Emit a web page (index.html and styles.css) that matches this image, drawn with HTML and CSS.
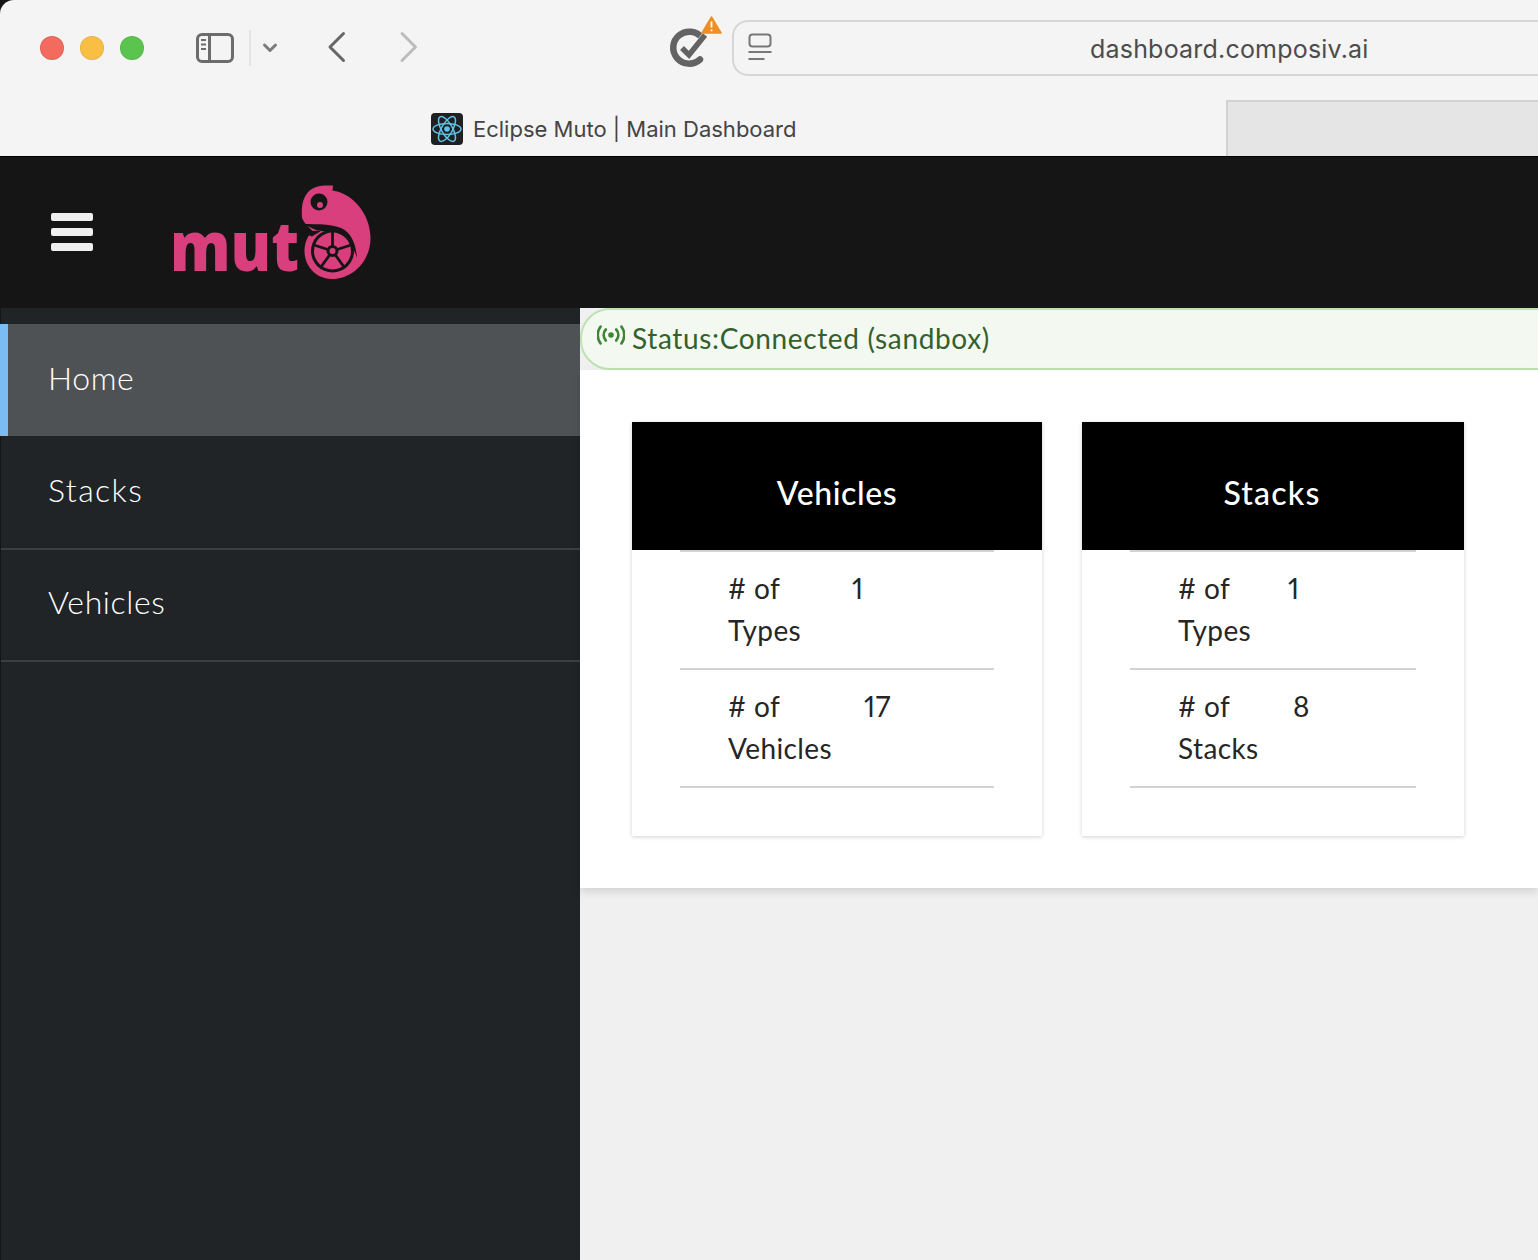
FILE: index.html
```html
<!DOCTYPE html>
<html lang="en">
<head>
<meta charset="utf-8">
<title>Eclipse Muto | Main Dashboard</title>
<link rel="stylesheet" href="styles.css">
</head>
<body>
<div class="window">
  <header class="chrome">
    <div class="toolbar">
      <div class="lights">
        <span class="light light-red"></span>
        <span class="light light-yellow"></span>
        <span class="light light-green"></span>
      </div>
      <svg class="ico-sidebar" width="40" height="32" viewBox="0 0 40 32" fill="none">
        <rect x="2.500" y="2.500" width="35" height="27" rx="4.500" stroke="#6c6c6c" stroke-width="3"/>
        <path d="M14.500 3v26" stroke="#6c6c6c" stroke-width="3"/>
        <path d="M6 8h5M6 12.500h5M6 17h5" stroke="#6c6c6c" stroke-width="2"/>
      </svg>
      <span class="sep"></span>
      <svg class="ico-down" width="16" height="12" viewBox="0 0 16 12" fill="none"><path d="M2.500 3l5.500 5.500L13.500 3" stroke="#7b7b7b" stroke-width="3" stroke-linecap="round" stroke-linejoin="round"/></svg>
      <svg class="ico-back" width="20" height="32" viewBox="0 0 20 32" fill="none"><path d="M16.500 2.500L3 16l13.500 13.500" stroke="#666" stroke-width="3" stroke-linecap="round" stroke-linejoin="round"/></svg>
      <svg class="ico-fwd" width="20" height="32" viewBox="0 0 20 32" fill="none"><path d="M3 2.500L16.500 16 3 29.500" stroke="#bcbcbc" stroke-width="3" stroke-linecap="round" stroke-linejoin="round"/></svg>
      <svg class="ico-ext" width="54" height="54" viewBox="0 0 54 54">
        <path d="M33 22A16 16 0 1 0 31 43.500" fill="none" stroke="#636363" stroke-width="6.500" stroke-linecap="round"/>
        <path d="M22 38L37 19" fill="none" stroke="#f4f4f4" stroke-width="8"/>
        <path d="M13 32l7 7L36 19" fill="none" stroke="#636363" stroke-width="5.500"/>
        <path d="M42.500 1L52 17H33z" fill="#ee8e26" stroke="#ee8e26" stroke-width="1.500" stroke-linejoin="round"/>
        <path d="M42.500 5.500v6M42.500 13.500v1.800" stroke="#fff" stroke-width="1.800"/>
      </svg>
      <div class="urlbar">
        <svg class="ico-page" width="24" height="30" viewBox="0 0 24 30" fill="none">
          <rect x="1.500" y="1.500" width="21" height="12" rx="3" stroke="#777" stroke-width="2"/>
          <path d="M0.500 19h23M0.500 26h16" stroke="#777" stroke-width="2"/>
        </svg>
        <span class="url">dashboard.composiv.ai</span>
      </div>
    </div>
    <div class="tabs">
      <div class="tab">
        <svg class="favicon" width="32" height="32" viewBox="0 0 32 32">
          <rect width="32" height="32" rx="4" fill="#1f2021"/>
          <g fill="none" stroke="#61c3e8" stroke-width="1.500">
            <ellipse cx="16" cy="16" rx="14" ry="5.500"/>
            <ellipse cx="16" cy="16" rx="14" ry="5.500" transform="rotate(60 16 16)"/>
            <ellipse cx="16" cy="16" rx="14" ry="5.500" transform="rotate(120 16 16)"/>
          </g>
          <circle cx="16" cy="16" r="2.800" fill="#61c3e8"/>
        </svg>
        <span class="tab-title">Eclipse Muto | Main Dashboard</span>
      </div>
      <div class="tab-inactive"></div>
    </div>
  </header>

  <header class="masthead">
    <button class="burger" type="button" aria-label="Menu"><span></span><span></span><span></span></button>
    <svg class="logo" width="202" height="100" viewBox="170 183 202 100" aria-label="muto">
      <text class="logo-text" x="170" y="271" textLength="129" lengthAdjust="spacingAndGlyphs">mut</text>
      <path fill="#d93f7d" d="M333 185.500l-.5 5C352 193 370 213 370.500 237c.5 24-18 42-38.500 42-16 0-27.500-13-27.500-28 0-8 3-15 8-20-3.500-4-9-8-10.500-13.500-1-12 1-26 14-30.500 6-2 11-1.500 17.500-1.500z"/>
      <path fill="#151515" d="M303 224c15 .3 28 0 38 4 10 4 15 16 16 30-4-13-12-24-26-26-6-.8-10-1-14-1.500z"/>
      <path fill="#151515" d="M297 230.500l24 .5-9 5.500z"/>
      <circle cx="319" cy="202" r="8.500" fill="#151515"/>
      <circle cx="320" cy="205" r="3" fill="#d93f7d"/>
      <circle cx="332.500" cy="251" r="21.500" fill="#151515"/>
      <circle cx="332.500" cy="251" r="18.500" fill="#d93f7d"/>
      <g stroke="#151515" stroke-width="2.800" stroke-linecap="round">
        <path d="M332.500 251v-18"/>
        <path d="M332.500 251l17-5.500"/>
        <path d="M332.500 251l10.500 14.500"/>
        <path d="M332.500 251l-10.500 14.500"/>
        <path d="M332.500 251l-17-5.500"/>
      </g>
      <circle cx="332.500" cy="251" r="6" fill="#151515"/>
      <circle cx="332.500" cy="251" r="3" fill="#d93f7d"/>
    </svg>
  </header>

  <div class="body-row">
    <nav class="sidebar">
      <a class="nav-item nav-active">Home</a>
      <a class="nav-item nav-line nav-stacks">Stacks</a>
      <a class="nav-item nav-line">Vehicles</a>
    </nav>
    <main class="main">
      <div class="status">
        <svg class="ico-status" width="28" height="20" viewBox="0 0 28 20" fill="none">
          <circle cx="14" cy="10" r="2.800" fill="#3e8635"/>
          <path d="M8.800 4.500a8 8 0 0 0 0 11M19.200 4.500a8 8 0 0 1 0 11M3.600 1.500a14 14 0 0 0 0 17M24.400 1.500a14 14 0 0 1 0 17" stroke="#3e8635" stroke-width="2.600" stroke-linecap="round"/>
        </svg>
        <span class="status-text">Status:Connected (sandbox)</span>
      </div>
      <section class="section">
        <article class="card">
          <h2 class="card-title">Vehicles</h2>
          <div class="card-body">
            <div class="row"><span class="term term-types">#&nbsp;of Types</span><span class="val">1</span></div>
            <div class="row"><span class="term">#&nbsp;of Vehicles</span><span class="val">17</span></div>
          </div>
        </article>
        <article class="card">
          <h2 class="card-title card-title-stacks">Stacks</h2>
          <div class="card-body">
            <div class="row"><span class="term term-types-narrow">#&nbsp;of Types</span><span class="val">1</span></div>
            <div class="row"><span class="term term-stacks">#&nbsp;of Stacks</span><span class="val">8</span></div>
          </div>
        </article>
      </section>
    </main>
  </div>
</div>
</body>
</html>
```

FILE: styles.css
```css
* { box-sizing: border-box; }
html, body { margin: 0; height: 100%; overflow: hidden; background: #151515; }
body { font-family: "Lato", "Liberation Sans", sans-serif; }

.window { height: 1260px; width: 1538px; display: flex; flex-direction: column; overflow: hidden; }

/* browser chrome */
.chrome { height: 156px; flex: none; background: #f4f4f4; border-top-left-radius: 14px; display: flex; flex-direction: column; }
.toolbar { height: 100px; flex: none; display: flex; align-items: center; padding: 0 0 4px 40px; }
.toolbar svg { flex: none; }
.lights { display: flex; gap: 16px; flex: none; }
.light { width: 24px; height: 24px; border-radius: 50%; border: 1px solid rgba(0,0,0,.07); }
.light-red { background: #f26b5e; }
.light-yellow { background: #f9bf45; }
.light-green { background: #5bc44f; }
.ico-sidebar { margin-left: 51px; }
.sep { width: 2px; height: 36px; background: #e4e4e4; margin-left: 14px; flex: none; }
.ico-down { margin-left: 11px; }
.ico-back { margin-left: 49px; margin-top: -2px; }
.ico-fwd { margin-left: 52px; margin-top: -2px; }
.ico-ext { margin-left: 250px; margin-top: -10px; }
.urlbar { flex: none; width: 900px; height: 56px; margin-left: 9px; border: 2px solid #d6d6d6; border-radius: 16px; display: flex; align-items: center; padding-left: 14px; }
.ico-page { flex: none; }
.url { font-family: "Inter", sans-serif; font-size: 25px; color: #4c4c4c; margin-left: 318px; letter-spacing: .2px; padding-top: 2px; white-space: nowrap; }

.tabs { flex: 1; display: flex; align-items: flex-end; }
.tab { display: flex; align-items: center; gap: 10px; padding-left: 431px; width: 1226px; height: 56px; padding-top: 2px; }
.favicon { flex: none; }
.tab-title { font-family: "Inter", sans-serif; font-size: 22px; color: #444; }
.tab-inactive { flex: 1; height: 56px; background: #e5e5e5; border-left: 2px solid #d2d2d2; border-top: 2px solid #d2d2d2; }

/* masthead */
.masthead { height: 152px; flex: none; background: #151515; border-top: 1px solid #000; display: flex; align-items: center; padding-left: 51px; }
.burger { width: 42px; height: 38px; padding: 0; margin: -2px 0 0; border: 0; background: none; display: flex; flex-direction: column; justify-content: space-between; }
.burger span { display: block; height: 8px; border-radius: 2px; background: #efefef; }
.logo { margin-left: 77px; overflow: visible; }
.logo-text { font-family: "Open Sans", sans-serif; font-weight: 800; font-size: 69px; fill: #d93f7d; }

/* layout */
.body-row { flex: 1; display: flex; min-height: 0; }

.sidebar { width: 580px; flex: none; background: #212427; padding-top: 16px; border-left: 1px solid #151515; }
.nav-item { display: flex; align-items: center; height: 112px; padding: 0 0 8px 47px; font-size: 32px; color: #fff; font-weight: 300; letter-spacing: .6px; }
.nav-line { border-bottom: 2px solid #3c3f42; }
.nav-stacks { letter-spacing: 1.400px; }
.nav-active { background: #4f5255; border-left: 8px solid #7cbcf5; padding: 0 0 6px 40px; margin: 0 0 2px -1px; }

.main { flex: 1; min-width: 0; background: #f0f0f0; display: flex; flex-direction: column; }

.status { height: 62px; flex: none; width: 1000px; display: flex; align-items: center; gap: 7px; padding: 0 0 2px 15px; background: #f3f9f0; border: 2px solid #bde2b1; border-radius: 30px 0 0 30px; }
.ico-status { flex: none; margin-top: -6px; }
.status-text { font-size: 28px; color: #33602b; font-weight: 400; letter-spacing: .65px; }

.section { background: #fff; padding: 52px; display: grid; grid-template-columns: 410px 382px; gap: 40px; box-shadow: 0 4px 8px rgba(0,0,0,.12); }
.card { background: #fff; box-shadow: 0 1px 4px rgba(0,0,0,.18); padding-bottom: 48px; }
.card-title { margin: 0; height: 128px; padding-top: 12px; background: #000; color: #fff; display: flex; align-items: center; justify-content: center; font-size: 32px; font-weight: 500; letter-spacing: .6px; }
.card-title-stacks { padding-right: 2px; letter-spacing: 1.200px; }
.card-body { margin: 0 48px; border-top: 2px solid #d2d2d2; }
.row { display: flex; gap: 32px; padding: 15px 48px 17px; border-bottom: 2px solid #d2d2d2; font-size: 28px; line-height: 42px; color: #262626; font-weight: 400; letter-spacing: .4px; font-variant-numeric: proportional-nums; }
.term { width: min-content; flex: none; }
.term-types { width: 92px; }
.term-types-narrow { width: 78px; }
.term-stacks { width: 83px; }
```
